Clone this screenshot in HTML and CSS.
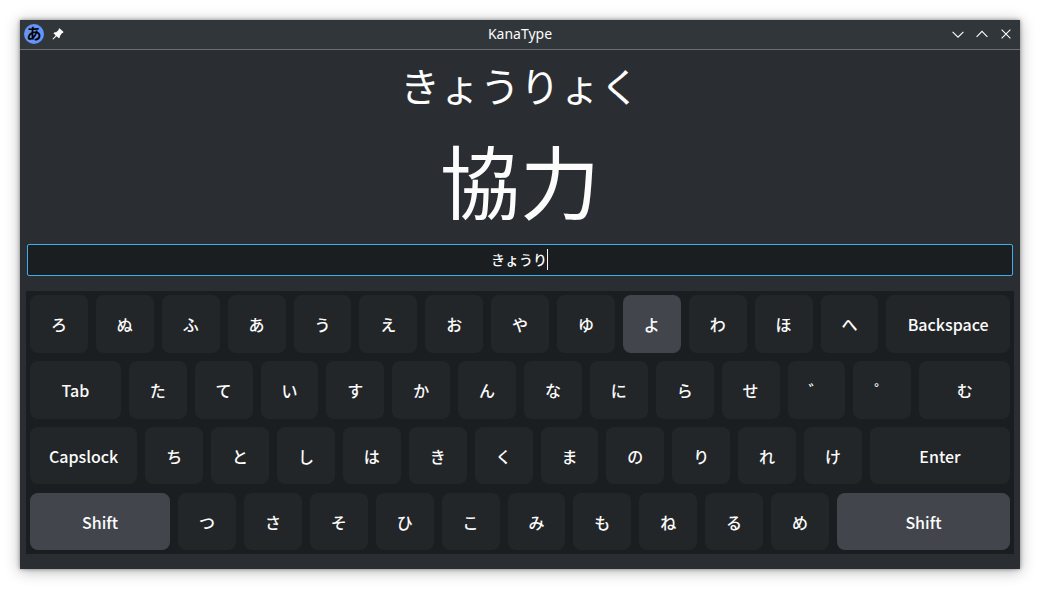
FILE: index.html
```html
<!DOCTYPE html>
<html lang="ja">
<head>
<meta charset="utf-8">
<title>KanaType</title>
<link rel="stylesheet" href="styles.css">
</head>
<body>
<div class="window">
  <header class="titlebar">
    <div class="side">
      <span class="logo">あ</span>
      <svg class="pin" width="12" height="12" viewBox="0 0 12 12"><path d="M7.5 0.3 L11.6 4 L10.7 5 L9.9 5.3 L7.9 7.9 L7.9 9.3 L6.9 10.2 L4.6 8.2 L1.2 11.6 L0.4 11 L3.7 7.4 L1.5 5.3 L2.6 4.2 L4.1 4.3 L6.6 2.1 L6.7 1.1 Z" fill="#fcfcfc"/></svg>
    </div>
    <div class="title">KanaType</div>
    <div class="side controls">
      <svg width="12" height="12" viewBox="0 0 12 12"><path d="M0.6 3.8 L6 9.2 L11.4 3.8"/></svg>
      <svg width="12" height="12" viewBox="0 0 12 12"><path d="M0.6 8.8 L6 3.4 L11.4 8.8"/></svg>
      <svg width="12" height="12" viewBox="0 0 12 12"><path d="M1.6 1.6 L10.4 10.4 M10.4 1.6 L1.6 10.4"/></svg>
    </div>
  </header>
  <main class="content">
    <div class="reading">きょうりょく</div>
    <div class="kanji">協力</div>
    <div class="entry"><span class="typed">きょうり</span></div>
    <div class="keyboard">
      <div class="row row-1">
        <div class="key">ろ</div><div class="key">ぬ</div><div class="key">ふ</div><div class="key">あ</div><div class="key">う</div><div class="key">え</div><div class="key">お</div><div class="key">や</div><div class="key">ゆ</div><div class="key active">よ</div><div class="key">わ</div><div class="key">ほ</div><div class="key">へ</div><div class="key">Backspace</div>
      </div>
      <div class="row row-2">
        <div class="key">Tab</div><div class="key">た</div><div class="key">て</div><div class="key">い</div><div class="key">す</div><div class="key">か</div><div class="key">ん</div><div class="key">な</div><div class="key">に</div><div class="key">ら</div><div class="key">せ</div><div class="key">゛</div><div class="key">゜</div><div class="key">む</div>
      </div>
      <div class="row row-3">
        <div class="key">Capslock</div><div class="key">ち</div><div class="key">と</div><div class="key">し</div><div class="key">は</div><div class="key">き</div><div class="key">く</div><div class="key">ま</div><div class="key">の</div><div class="key">り</div><div class="key">れ</div><div class="key">け</div><div class="key">Enter</div>
      </div>
      <div class="row row-4">
        <div class="key active">Shift</div><div class="key">つ</div><div class="key">さ</div><div class="key">そ</div><div class="key">ひ</div><div class="key">こ</div><div class="key">み</div><div class="key">も</div><div class="key">ね</div><div class="key">る</div><div class="key">め</div><div class="key active">Shift</div>
      </div>
    </div>
  </main>
</div>
</body>
</html>
```

FILE: styles.css
```css
* { box-sizing: border-box; }
body {
  margin: 0;
  padding: 20px;
  height: 589px;
  overflow: hidden;
  background: #fff;
  color: #fcfcfc;
  font-family: "Noto Sans CJK JP", sans-serif;
}
.window {
  height: 549px;
  background: #2a2e32;
  box-shadow: 0 2px 14px rgba(0, 0, 0, 0.3), 0 0 4px rgba(0, 0, 0, 0.4);
}
.titlebar {
  display: flex;
  align-items: center;
  height: 30px;
  padding: 0 8px 1px 4px;
  border-bottom: 1px solid #6a6e71;
  background: #31363b;
}
.side {
  display: flex;
  align-items: center;
  gap: 8px;
  width: 98px;
}
.controls {
  justify-content: flex-end;
  gap: 12px;
  width: 94px;
}
.controls svg { fill: none; stroke: #fcfcfc; stroke-width: 1.1; }
.logo {
  width: 20px;
  height: 20px;
  border-radius: 50%;
  background: #6495fb;
  color: #000;
  font-size: 15px;
  font-weight: 700;
  line-height: 18px;
  text-align: center;
}
.title {
  flex: 1;
  text-align: center;
  font: 14px/20px "Noto Sans", sans-serif;
}
.content { padding: 0 6px; }
.reading {
  padding-top: 6px;
  font-size: 40px;
  line-height: 58px;
  text-align: center;
}
.kanji {
  height: 130px;
  font-size: 80px;
  line-height: 128px;
  text-align: center;
}
.entry {
  display: flex;
  align-items: center;
  justify-content: center;
  height: 32px;
  margin: 0 1px 15px;
  padding: 0 1px 2px 0;
  border: 1px solid #3daee9;
  border-radius: 2px;
  background: #1b1e20;
}
.typed {
  height: 21px;
  border-right: 1px solid #fcfcfc;
  font-size: 14px;
  font-weight: 500;
  line-height: 20px;
}
.keyboard {
  display: grid;
  grid-template-rows: repeat(4, 58px);
  gap: 8px;
  height: 263px;
  padding: 4px 4px 0;
  background: #1b1e20;
}
.row { display: flex; gap: 8px; }
.row-3, .row-4 { height: 57px; }
.row-3 .key, .row-4 .key { padding-top: 1px; }
.key {
  flex: none;
  display: flex;
  align-items: center;
  justify-content: center;
  width: 57.88px;
  border-radius: 8px;
  background: #232629;
  font-size: 16px;
  font-weight: 500;
  line-height: 24px;
}
.active { background: #42464c; }
.row-2 .key:first-child { width: 90.8px; }
.row-3 .key:first-child { width: 107.27px; }
.row-4 .key:first-child { width: 140.2px; }
.row .key:last-child { flex: 1; }
```
